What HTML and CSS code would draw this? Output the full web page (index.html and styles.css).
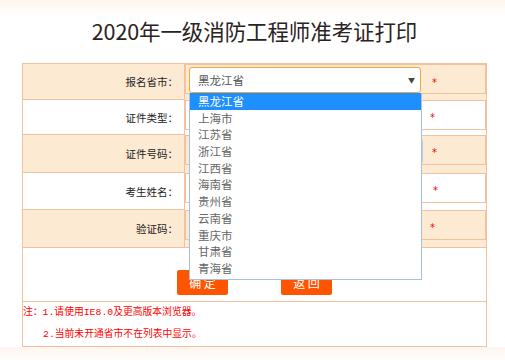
FILE: index.html
```html
<!DOCTYPE html>
<html lang="zh-CN">
<head>
    <meta charset="UTF-8">
    <title>2020年一级消防工程师准考证打印</title>
    <link rel="stylesheet" href="styles.css">
</head>
<body>
    <div class="page">
        <h1 class="title">2020年一级消防工程师准考证打印</h1>

        <table class="print-form">
            <tr class="row-odd row-h1">
                <td class="label">报名省市：</td>
                <td class="field">
                    <div class="select-wrap">
                        <div class="select">黑龙江省<span class="arrow">&#9660;</span></div>
                        <ul class="dropdown">
                            <li class="active">黑龙江省</li>
                            <li>上海市</li>
                            <li>江苏省</li>
                            <li>浙江省</li>
                            <li>江西省</li>
                            <li>海南省</li>
                            <li>贵州省</li>
                            <li>云南省</li>
                            <li>重庆市</li>
                            <li>甘肃省</li>
                            <li>青海省</li>
                        </ul>
                    </div>
                    <span class="star">*</span>
                </td>
            </tr>
            <tr class="row-h2">
                <td class="label">证件类型：</td>
                <td class="field"><div class="input"></div><span class="star">*</span></td>
            </tr>
            <tr class="row-odd row-h3">
                <td class="label">证件号码：</td>
                <td class="field"><div class="input input-wide"></div><span class="star star-wide">*</span></td>
            </tr>
            <tr class="row-h4">
                <td class="label">考生姓名：</td>
                <td class="field"><div class="input"></div><span class="star star-far">*</span></td>
            </tr>
            <tr class="row-odd row-h5">
                <td class="label">验证码：</td>
                <td class="field"><div class="input"></div><span class="star">*</span></td>
            </tr>
            <tr class="row-buttons">
                <td colspan="2">
                    <div class="buttons">
                        <button type="button" class="btn">确 定</button>
                        <button type="button" class="btn">返 回</button>
                    </div>
                </td>
            </tr>
            <tr class="row-notes">
                <td colspan="2">
                    <p class="note">注：1.请使用IE8.0及更高版本浏览器。</p>
                    <p class="note note-indent">2.当前未开通省市不在列表中显示。</p>
                </td>
            </tr>
        </table>
    </div>
</body>
</html>
```

FILE: styles.css
```css
body {
    margin: 0;
    padding: 0;
    background: linear-gradient(#fff5ee 0, #ffffff 16px);
    font-family: "Noto Sans CJK SC", sans-serif;
    color: #333333;
}

.page {
    width: 465px;
    margin-left: 22px;
}

.title {
    margin: 0;
    height: 63px;
    line-height: 62px;
    font-size: 21.5px;
    font-weight: normal;
    color: #2b2222;
    text-align: center;
    letter-spacing: -0.1px;
}

.print-form {
    width: 465px;
    border-collapse: collapse;
    border: 1px solid #f3c19d;
}

.print-form td {
    border: 1px solid #f3c19d;
    padding: 0;
}

.row-odd {
    background-color: #fdead3;
}

.row-h1 { height: 36px; }
.row-h2 { height: 35px; }
.row-h3 { height: 38px; }
.row-h4 { height: 37px; }
.row-h5 { height: 38px; }

.label {
    width: 155px;
    padding-right: 6px !important;
    text-align: right;
    font-size: 10.5px;
    color: #222222;
}

.field {
    padding-left: 3px !important;
    padding-top: 2px !important;
}

.field,
.select-wrap {
    display: flex;
    align-items: center;
}

.select-wrap {
    position: relative;
}

.select {
    box-sizing: border-box;
    width: 232px;
    height: 26px;
    padding-left: 8px;
    border: 1px solid #f2a73a;
    border-radius: 3px;
    background: #ffffff;
    font-size: 11.5px;
    line-height: 24px;
    color: #555555;
    position: relative;
}

.arrow {
    position: absolute;
    right: 5px;
    top: 0;
    font-size: 7px;
    color: #444444;
}

.dropdown {
    position: absolute;
    top: 26px;
    left: 0;
    z-index: 2;
    box-sizing: border-box;
    width: 233px;
    margin: 0;
    padding: 0 0 2px;
    list-style: none;
    background: #ffffff;
    border: 1px solid #a6bfe6;
    border-top: none;
}

.dropdown li {
    height: 16.7px;
    line-height: 16.7px;
    padding-left: 8px;
    font-size: 11.5px;
    color: #666666;
}

.dropdown li.active {
    background-color: #1e8fff;
    color: #ffffff;
}

.input {
    box-sizing: border-box;
    width: 230px;
    height: 26px;
    border: 1px solid #cccccc;
    border-radius: 3px;
    background: #ffffff;
}

.input-wide {
    width: 234px;
}

.star {
    margin-left: 11px;
    color: #ff0000;
    font-family: "DejaVu Sans", sans-serif;
    font-size: 10px;
    padding-top: 4px;
}

.star-wide {
    margin-left: 9px;
}

.star-far {
    margin-left: 14px;
}

.row-buttons {
    height: 54px;
}

.row-buttons td {
    vertical-align: top;
}

.buttons {
    display: flex;
    justify-content: center;
    gap: 53px;
    padding-top: 22px;
}

.btn {
    width: 51px;
    height: 25px;
    padding: 0;
    border: none;
    border-radius: 2px;
    background-color: #ff5500;
    color: #ffffff;
    font-family: "Noto Sans CJK SC", sans-serif;
    font-size: 12px;
    cursor: pointer;
}

.row-notes {
    height: 44px;
}

.note {
    margin: 0;
    height: 22px;
    line-height: 22px;
    font-family: "Liberation Mono", "Noto Sans CJK SC", monospace;
    font-size: 9.8px;
    color: #ff0000;
}

.note-indent {
    padding-left: 20px;
}
```
